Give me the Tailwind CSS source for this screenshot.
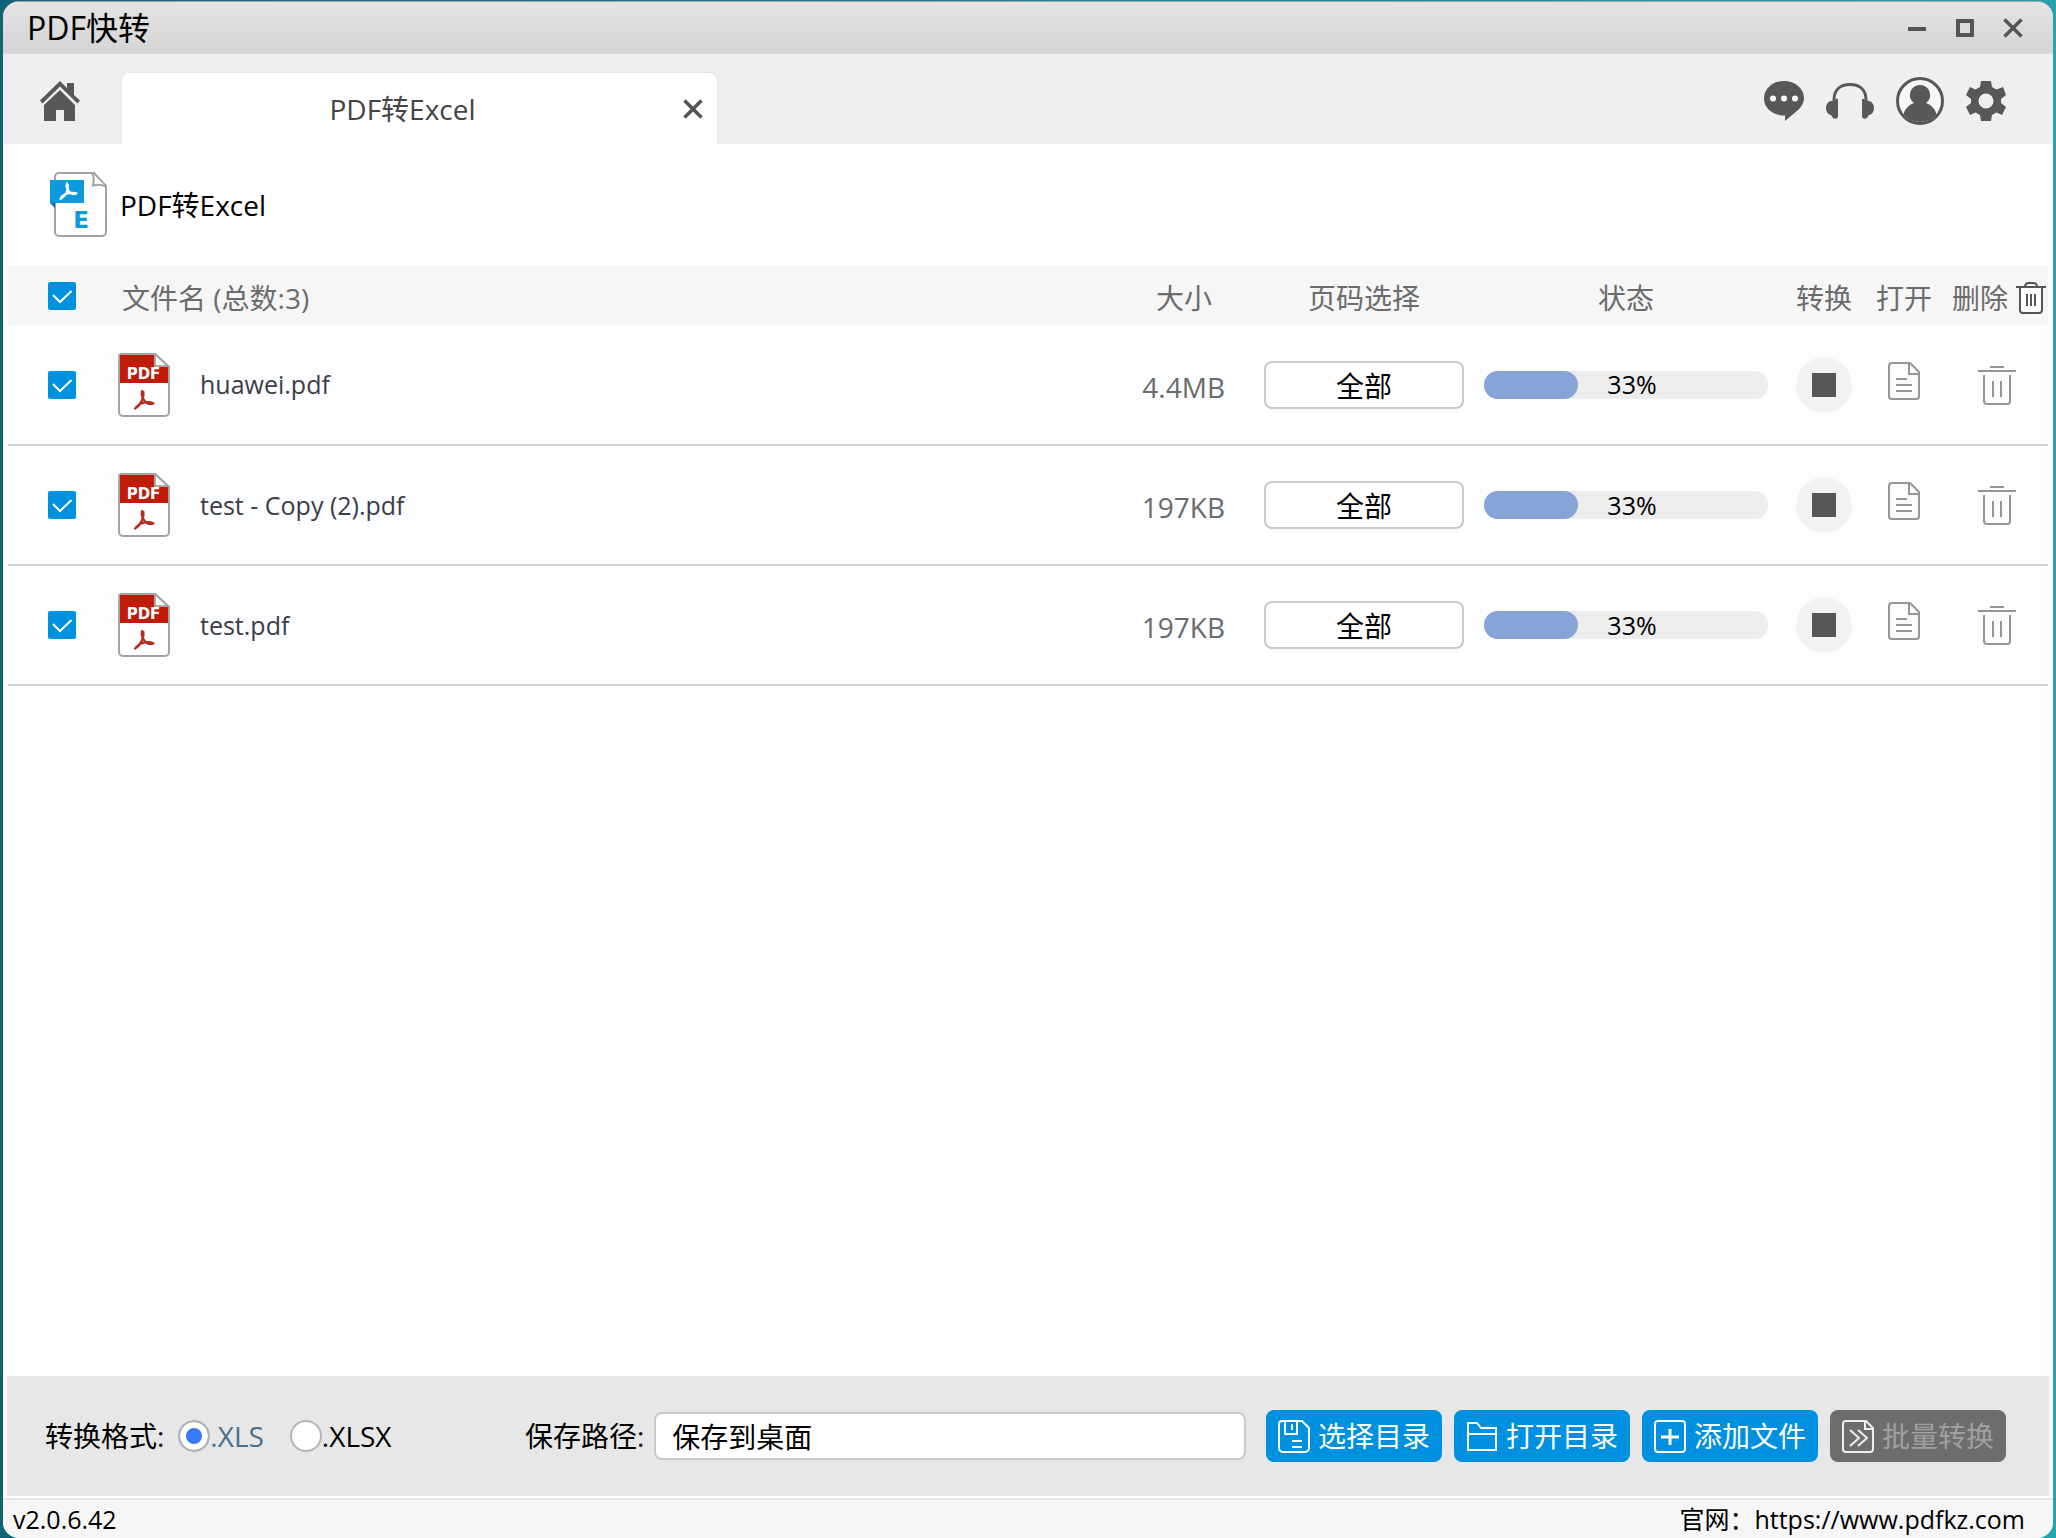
<!DOCTYPE html>
<html lang="zh-CN">
<head>
    <meta charset="UTF-8">
    <meta name="viewport" content="width=device-width, initial-scale=1.0">
    <title>PDF快转</title>
    <script src="https://cdn.jsdelivr.net/npm/@tailwindcss/browser@4"></script>
</head>
<body class="font-['Open_Sans','Noto_Sans_CJK_SC',sans-serif] text-black">
    <!-- Icon sprite -->
    <svg class="hidden">
        <symbol id="icon-check" viewBox="0 0 28 28">
            <path d="M5 13l7 7L23.500 9" fill="none" stroke="#fff" stroke-width="2"/>
        </symbol>
        <symbol id="icon-pdf" viewBox="0 0 52 64">
            <path d="M4 1h33l14 13v45a4 4 0 0 1-4 4H5a4 4 0 0 1-4-4V4a3 3 0 0 1 3-3z" fill="#fff" stroke="#a3a3a3" stroke-width="2"/>
            <path d="M2 2h35v12h13v16H2z" fill="#c01c07"/>
            <path d="M37 1.500V13h13" fill="#fff" stroke="#b0a8a6" stroke-width="2"/>
            <path d="M38 3l10 9H38z" fill="#fff"/>
            <path d="M37 1l14 13" stroke="#a3a3a3" stroke-width="2"/>
            <text x="25.500" y="26" text-anchor="middle" font-family="DejaVu Sans" font-weight="bold" font-size="15" fill="#fff">PDF</text>
            <path d="M24 38c-1 3 .5 8 4 11.500 2 1.800 5 2 7.500 1M25.500 39c.8 5-2.500 13-8.500 16.500M18 54.500c3-3.500 9-6 16-5" fill="none" stroke="#b8281c" stroke-width="2.200" stroke-linecap="round"/>
        </symbol>
        <symbol id="icon-excel" viewBox="0 0 58 66">
            <path d="M9 1h35l12 13v46a4 4 0 0 1-4 4H9a4 4 0 0 1-4-4V5a4 4 0 0 1 4-4z" fill="#fff" stroke="#a3a3a3" stroke-width="2"/>
            <path d="M42 1.500c3 3 1.500 9 1 12 4-1 9-1 13 1" fill="#fff" stroke="#a3a3a3" stroke-width="2"/>
            <path d="M0 31h5v5z" fill="#0a6ea8"/>
            <path d="M0 8h34v23H0z" fill="#0b9bdc"/>
            <path d="M17 11.500c-1.500 3 .5 7.500 4.500 10 1.500.8 3 .8 5-.2M18 13c.5 6-3 11.500-7.500 14M11 25.500c3-3.500 8-5 14.500-4.500" fill="none" stroke="#fff" stroke-width="2.200" stroke-linecap="round"/>
            <text x="31" y="56" text-anchor="middle" font-family="DejaVu Sans" font-weight="bold" font-size="23" fill="#0b9bdc">E</text>
        </symbol>
        <symbol id="icon-doc" viewBox="0 0 32 38">
            <path d="M4 1h18l9 9v24a3 3 0 0 1-3 3H4a3 3 0 0 1-3-3V4a3 3 0 0 1 3-3zM21 1v11h10M8 17h11M8 23h16M8 29h16" fill="none" stroke="#959595" stroke-width="2"/>
        </symbol>
        <symbol id="icon-trash" viewBox="0 0 38 40">
            <path d="M12 2h14M0 6h38M6 10v26a3 3 0 0 0 3 3h20a3 3 0 0 0 3-3V10M15 16v16M23 16v16" fill="none" stroke="#959595" stroke-width="2"/>
        </symbol>
    </svg>

    <!-- Desktop behind the window -->
    <div class="h-screen px-[3px] pt-px bg-linear-to-r from-[#0f6478] to-[#27a3ad]">
        <div class="h-full flex flex-col rounded-2xl overflow-hidden border-t border-[#a5a5a5] bg-white">
            <!-- Title bar -->
            <header class="h-[52px] shrink-0 pl-6 pr-[30px] flex items-center justify-between bg-linear-to-b from-[#e5e3e3] to-[#d5d4d4] border-b border-[#dedede]">
                <h1 class="text-[32px] leading-none">PDF快转</h1>
                <div class="flex items-center gap-7 text-[#555]">
                    <button aria-label="最小化"><svg class="size-5" viewBox="0 0 20 20"><path d="M1 11h18" stroke="currentColor" stroke-width="4"/></svg></button>
                    <button aria-label="最大化"><svg class="size-5" viewBox="0 0 20 20"><path d="M3 3h14v14H3z" fill="none" stroke="currentColor" stroke-width="4"/></svg></button>
                    <button aria-label="关闭"><svg class="size-5" viewBox="0 0 20 20"><path d="M1.500 1.500l17 17M18.500 1.500l-17 17" stroke="currentColor" stroke-width="3.500"/></svg></button>
                </div>
            </header>

            <!-- Tabs -->
            <nav class="h-[90px] shrink-0 pr-[47px] flex bg-[#efefef]">
                <button class="w-[118px] pr-1 pb-1 flex items-center justify-center text-[#585858]" aria-label="首页">
                    <svg class="w-10 h-10 mt-2" viewBox="0 0 40 40" fill="currentColor">
                        <path d="M20 0L27 7V2h7v12l6 5.500-2.500 3L20 5.500 2.500 22.500 0 19.500z"/>
                        <path d="M20 9L4 24v16h12V29h8v11h11V24z"/>
                    </svg>
                </button>
                <div class="w-[597px] mt-[18px] pr-3.5 flex items-center bg-white rounded-t-lg border-t border-x border-[#e6e6e6] border-b-white">
                    <span class="flex-1 text-center text-[28px] leading-none text-[#444]">PDF转Excel</span>
                    <button class="text-[#555]" aria-label="关闭标签"><svg class="size-5" viewBox="0 0 20 20"><path d="M1.500 1.500l17 17M18.500 1.500l-17 17" stroke="currentColor" stroke-width="3.500"/></svg></button>
                </div>
                <div class="ml-auto pt-1 flex items-center gap-[22px] text-[#585858]">
                    <button aria-label="消息">
                        <svg class="w-10 h-10" viewBox="0 0 40 40">
                            <path d="M20 0c11 0 20 7.500 20 17 0 5-2.500 9-6.500 12.500L21 40v-5.500C9 34.500 0 27.500 0 17.500S9 0 20 0z" fill="currentColor"/>
                            <circle cx="9" cy="17.500" r="3" fill="#fff"/><circle cx="20" cy="17.500" r="3" fill="#fff"/><circle cx="31" cy="17.500" r="3" fill="#fff"/>
                        </svg>
                    </button>
                    <button aria-label="客服">
                        <svg class="w-12 h-9" viewBox="0 0 48 36">
                            <path d="M8 17C8 7 14 1.500 24 1.500S40 7 40 17" fill="none" stroke="currentColor" stroke-width="3"/>
                            <path d="M12 15.500v18c0 2-3 3-5 1.500l-2-3c-3-.5-5-3.500-5-7s2-6.500 5-7zM36 15.500v18c0 2 3 3 5 1.500l2-3c3-.5 5-3.500 5-7s-2-6.500-5-7z" fill="currentColor"/>
                        </svg>
                    </button>
                    <button aria-label="账户">
                        <svg class="size-12" viewBox="0 0 48 48">
                            <circle cx="24" cy="24" r="22.500" fill="#f8f8f8" stroke="currentColor" stroke-width="3"/>
                            <path d="M24 8a10 10 0 0 1 6 18c5 2 9.500 6 10.500 11.500a22 22 0 0 1-33 0C8.500 32 13 28 18 26a10 10 0 0 1 6-18z" fill="currentColor"/>
                        </svg>
                    </button>
                    <button aria-label="设置">
                        <svg class="w-10 h-10" viewBox="0 0 40 40">
                            <path d="M15 0h10l1 6 4.500 2.500L37 6l3 8-5 4v4l5 4-4 8-5.500-2.500L26 34l-1 6H15l-1-6-4.500-2.500L4 34l-4-8 5-4v-4l-5-4 4-8 5.500 2.500L14 6zM20 12.500a7.500 7.500 0 1 0 0 15 7.500 7.500 0 0 0 0-15z" fill="currentColor" fill-rule="evenodd"/>
                        </svg>
                    </button>
                </div>
            </nav>

            <!-- Page heading -->
            <div class="h-[122px] shrink-0 pl-[47px] flex items-center gap-3">
                <svg class="w-[58px] h-[66px]"><use href="#icon-excel"/></svg>
                <h2 class="text-[28px] leading-none">PDF转Excel</h2>
            </div>

            <!-- File list -->
            <main class="flex-1 min-h-0 px-[5px]">
                <div class="h-full bg-[#fcfdff]">
                    <table class="w-full table-fixed text-[28px] leading-none text-[#6b6b6b]">
                        <colgroup>
                            <col class="w-[106px]">
                            <col>
                            <col class="w-[136px]">
                            <col class="w-[224px]">
                            <col class="w-[300px]">
                            <col class="w-24">
                            <col class="w-16">
                            <col class="w-28">
                        </colgroup>
                        <thead>
                            <tr class="h-[59px] bg-[#f6f6f6]">
                                <th class="pl-10 font-normal">
                                    <label class="grid w-7"><input type="checkbox" checked aria-label="全选" class="appearance-none size-7 rounded-xs bg-[#0090e0] col-start-1 row-start-1"><svg class="size-7 pointer-events-none col-start-1 row-start-1"><use href="#icon-check"/></svg></label>
                                </th>
                                <th class="pt-1 pl-2 text-left font-normal">文件名 (总数:3)</th>
                                <th class="pt-1 font-normal">大小</th>
                                <th class="pt-1 font-normal">页码选择</th>
                                <th class="pt-1 font-normal">状态</th>
                                <th class="pt-1 font-normal">转换</th>
                                <th class="pt-1 font-normal whitespace-nowrap">打开</th>
                                <th class="pt-1 pl-4 font-normal">
                                    <div class="flex items-center gap-2 whitespace-nowrap">
                                        删除
                                        <button aria-label="全部删除">
                                            <svg class="w-[30px] h-8" viewBox="0 0 30 32" fill="none" stroke="#555" stroke-width="2">
                                                <path d="M4 6v22a3 3 0 0 0 3 3h16a3 3 0 0 0 3-3V6" fill="#fff"/>
                                                <path d="M0 5h30M9 5c0-3 2-4 4-4h4c2 0 4 1 4 4M11 12v12M15 12v12M19 12v12"/>
                                            </svg>
                                        </button>
                                    </div>
                                </th>
                            </tr>
                        </thead>
                        <tbody>
                            <tr class="h-[120px] border-b-2 border-[#d0d2d4]">
                                <td class="pl-10">
                                    <label class="grid w-7"><input type="checkbox" checked aria-label="huawei.pdf" class="appearance-none size-7 rounded-xs bg-[#0090e0] col-start-1 row-start-1"><svg class="size-7 pointer-events-none col-start-1 row-start-1"><use href="#icon-check"/></svg></label>
                                </td>
                                <td class="pl-1">
                                    <div class="flex items-center gap-[30px] text-[25px] leading-none text-[#3c3c46]">
                                        <svg class="w-[52px] h-16"><use href="#icon-pdf"/></svg>
                                        huawei.pdf
                                    </div>
                                </td>
                                <td class="pt-1 pr-[27px] text-right">4.4MB</td>
                                <td class="text-center"><button class="w-[200px] h-12 pt-0.5 bg-white border-2 border-[#c9cacc] rounded-lg text-black leading-none">全部</button></td>
                                <td class="px-2">
                                    <div class="grid items-center h-7 rounded-full bg-[#ededed]">
                                        <div class="h-7 rounded-full bg-[#86a5d6] col-start-1 row-start-1" style="width: 33%"></div>
                                        <span class="pl-3 text-[25px] leading-none text-center text-black col-start-1 row-start-1">33%</span>
                                    </div>
                                </td>
                                <td class="text-center"><button class="inline-grid place-items-center size-14 rounded-full bg-[#f2f2f2] align-middle" aria-label="停止"><span class="size-6 bg-[#575759]"></span></button></td>
                                <td class="pb-2 text-center"><button class="align-middle" aria-label="打开"><svg class="w-8 h-[38px]"><use href="#icon-doc"/></svg></button></td>
                                <td class="pl-[10px] text-center"><button class="align-middle" aria-label="删除"><svg class="w-[38px] h-10"><use href="#icon-trash"/></svg></button></td>
                            </tr>
                            <tr class="h-[120px] border-b-2 border-[#d0d2d4]">
                                <td class="pl-10">
                                    <label class="grid w-7"><input type="checkbox" checked aria-label="test - Copy (2).pdf" class="appearance-none size-7 rounded-xs bg-[#0090e0] col-start-1 row-start-1"><svg class="size-7 pointer-events-none col-start-1 row-start-1"><use href="#icon-check"/></svg></label>
                                </td>
                                <td class="pl-1">
                                    <div class="flex items-center gap-[30px] text-[25px] leading-none text-[#3c3c46]">
                                        <svg class="w-[52px] h-16"><use href="#icon-pdf"/></svg>
                                        test - Copy (2).pdf
                                    </div>
                                </td>
                                <td class="pt-1 pr-[27px] text-right">197KB</td>
                                <td class="text-center"><button class="w-[200px] h-12 pt-0.5 bg-white border-2 border-[#c9cacc] rounded-lg text-black leading-none">全部</button></td>
                                <td class="px-2">
                                    <div class="grid items-center h-7 rounded-full bg-[#ededed]">
                                        <div class="h-7 rounded-full bg-[#86a5d6] col-start-1 row-start-1" style="width: 33%"></div>
                                        <span class="pl-3 text-[25px] leading-none text-center text-black col-start-1 row-start-1">33%</span>
                                    </div>
                                </td>
                                <td class="text-center"><button class="inline-grid place-items-center size-14 rounded-full bg-[#f2f2f2] align-middle" aria-label="停止"><span class="size-6 bg-[#575759]"></span></button></td>
                                <td class="pb-2 text-center"><button class="align-middle" aria-label="打开"><svg class="w-8 h-[38px]"><use href="#icon-doc"/></svg></button></td>
                                <td class="pl-[10px] text-center"><button class="align-middle" aria-label="删除"><svg class="w-[38px] h-10"><use href="#icon-trash"/></svg></button></td>
                            </tr>
                            <tr class="h-[120px] border-b-2 border-[#d0d2d4]">
                                <td class="pl-10">
                                    <label class="grid w-7"><input type="checkbox" checked aria-label="test.pdf" class="appearance-none size-7 rounded-xs bg-[#0090e0] col-start-1 row-start-1"><svg class="size-7 pointer-events-none col-start-1 row-start-1"><use href="#icon-check"/></svg></label>
                                </td>
                                <td class="pl-1">
                                    <div class="flex items-center gap-[30px] text-[25px] leading-none text-[#3c3c46]">
                                        <svg class="w-[52px] h-16"><use href="#icon-pdf"/></svg>
                                        test.pdf
                                    </div>
                                </td>
                                <td class="pt-1 pr-[27px] text-right">197KB</td>
                                <td class="text-center"><button class="w-[200px] h-12 pt-0.5 bg-white border-2 border-[#c9cacc] rounded-lg text-black leading-none">全部</button></td>
                                <td class="px-2">
                                    <div class="grid items-center h-7 rounded-full bg-[#ededed]">
                                        <div class="h-7 rounded-full bg-[#86a5d6] col-start-1 row-start-1" style="width: 33%"></div>
                                        <span class="pl-3 text-[25px] leading-none text-center text-black col-start-1 row-start-1">33%</span>
                                    </div>
                                </td>
                                <td class="text-center"><button class="inline-grid place-items-center size-14 rounded-full bg-[#f2f2f2] align-middle" aria-label="停止"><span class="size-6 bg-[#575759]"></span></button></td>
                                <td class="pb-2 text-center"><button class="align-middle" aria-label="打开"><svg class="w-8 h-[38px]"><use href="#icon-doc"/></svg></button></td>
                                <td class="pl-[10px] text-center"><button class="align-middle" aria-label="删除"><svg class="w-[38px] h-10"><use href="#icon-trash"/></svg></button></td>
                            </tr>
                        </tbody>
                    </table>
                </div>
            </main>

            <!-- Output options -->
            <div class="h-[120px] shrink-0 mx-1 pl-[38px] pr-[43px] flex items-center bg-[#e7e7e7] text-[28px] leading-none">
                <div class="w-[480px] flex items-center" role="radiogroup" aria-labelledby="formatLabel">
                    <span id="formatLabel">转换格式:</span>
                    <label class="ml-3.5 flex items-center text-[#46708c]"><input type="radio" name="format" checked class="appearance-none size-8 rounded-full border-2 border-[#b4b4b4] bg-white checked:bg-[#3a78f8] checked:shadow-[inset_0_0_0_6px_white]">.XLS</label>
                    <label class="ml-[26px] flex items-center"><input type="radio" name="format" class="appearance-none size-8 rounded-full border-2 border-[#b4b4b4] bg-white">.XLSX</label>
                </div>
                <label for="savePath" class="shrink-0">保存路径:</label>
                <input id="savePath" type="text" value="保存到桌面" class="ml-2.5 flex-1 min-w-0 h-12 px-4 bg-white border-2 border-[#c9c9c9] rounded-lg">
                <div class="ml-5 flex gap-3 text-white">
                    <button class="w-44 h-[52px] flex items-center justify-center gap-2 rounded-lg bg-[#0090e0]">
                        <svg class="w-8 h-[34px]" viewBox="0 0 32 34" fill="none" stroke="currentColor" stroke-width="2"><path d="M4 2h20l7 7v20a4 4 0 0 1-4 4H5a4 4 0 0 1-4-4V5a3 3 0 0 1 3-3zM7 2v13h12V2M14 5v6M14 22h10M14 28h10"/></svg>
                        选择目录
                    </button>
                    <button class="w-44 h-[52px] flex items-center justify-center gap-2 rounded-lg bg-[#0090e0]">
                        <svg class="w-8 h-[34px]" viewBox="0 0 32 34" fill="none" stroke="currentColor" stroke-width="2"><path d="M2 4h9l4 5h15v22H2zM2 15h28"/></svg>
                        打开目录
                    </button>
                    <button class="w-44 h-[52px] flex items-center justify-center gap-2 rounded-lg bg-[#0090e0]">
                        <svg class="w-8 h-[34px]" viewBox="0 0 32 34" fill="none" stroke="currentColor" stroke-width="2"><rect x="1" y="2" width="30" height="31" rx="3"/><path d="M16 10v16M7 18h18" stroke-width="3"/></svg>
                        添加文件
                    </button>
                    <button disabled class="w-44 h-[52px] flex items-center justify-center gap-2 rounded-lg bg-[#6d6d6d] text-[#a0a0a0]">
                        <svg class="w-8 h-[34px]" viewBox="0 0 32 34" fill="none" stroke="#eee" stroke-width="2"><path d="M4 2h20l7 7v21a3 3 0 0 1-3 3H4a3 3 0 0 1-3-3V5a3 3 0 0 1 3-3zM23 2v8h8M8 11l9 8-9 8M16 11l9 8-9 8"/></svg>
                        批量转换
                    </button>
                </div>
            </div>

            <!-- Status bar -->
            <footer class="h-10 shrink-0 mt-0.5 pl-2.5 pr-7 flex items-center justify-between bg-[#f6f6f6] border-t-2 border-[#e7e7e7] text-[25px] leading-none">
                <span>v2.0.6.42</span>
                <span>官网：<a href="https://www.pdfkz.com">https://www.pdfkz.com</a></span>
            </footer>
        </div>
    </div>
</body>
</html>
